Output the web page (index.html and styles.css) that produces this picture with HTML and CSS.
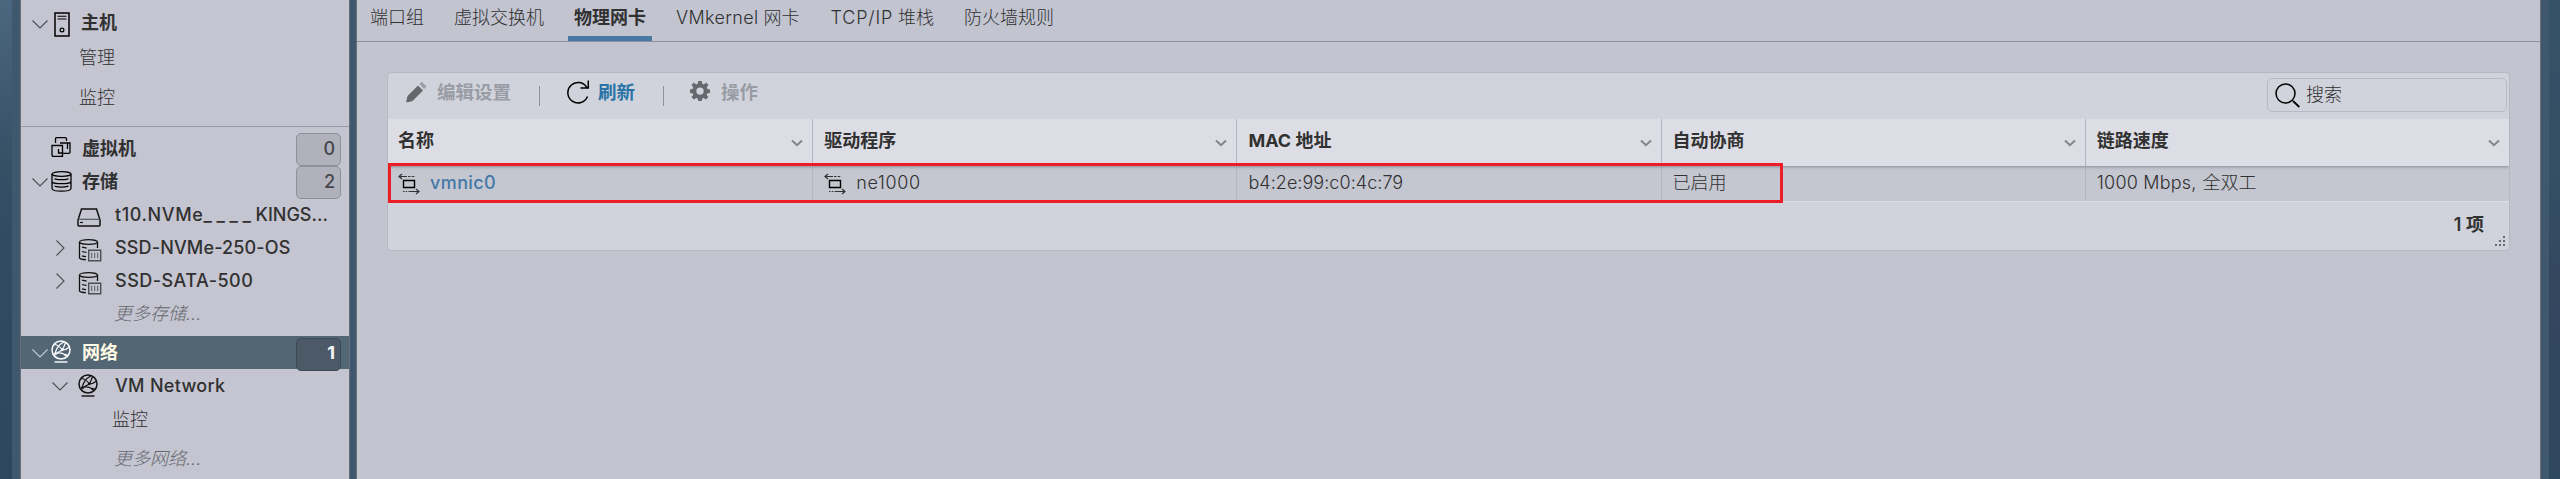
FILE: index.html
```html
<!DOCTYPE html>
<html lang="zh-CN">
<head>
<meta charset="utf-8">
<title>VMware ESXi</title>
<link rel="stylesheet" href="styles.css">
</head>
<body>
<svg class="defs" width="0" height="0">
  <symbol id="down" viewBox="0 0 16 9"><path d="M.5.5 8 8 15.5.5" fill="none" stroke="currentColor" stroke-width="1.1"/></symbol>
  <symbol id="right" viewBox="0 0 9 16"><path d="M.5.5 8 8 .5 15.5" fill="none" stroke="currentColor" stroke-width="1.1"/></symbol>
  <symbol id="caret" viewBox="0 0 12 8"><path d="M1 1.5 6 6.2 11 1.5" fill="none" stroke="currentColor" stroke-width="2"/></symbol>
  <symbol id="globe" viewBox="0 0 20 23"><g fill="none" stroke="currentColor" stroke-width="1.200"><circle cx="10" cy="10" r="9" stroke-width="1.500"/><path d="M3.500 4.500Q8 5 11.300 10Q15 10 18.500 7M11.300 10Q13.500 6 14.500 2.500M4 14Q5.500 6 13 1.800M4 14Q9 11.500 14.500 15L17 15M4 14 11.300 10"/></g><circle cx="11.300" cy="9.800" r="1.400" fill="currentColor"/><circle cx="4.500" cy="13.800" r="1.400" fill="currentColor"/><circle cx="14.500" cy="15" r="1.200" fill="currentColor"/><path d="M3.500 22h13" stroke="currentColor" stroke-width="2" opacity=".7"/></symbol>
  <symbol id="datastore" viewBox="0 0 24 23"><g fill="none" stroke="currentColor" stroke-width="1.300"><ellipse cx="10.500" cy="3" rx="9" ry="2.300"/><path d="M1.500 3v16Q2 20.500 8 20.700M19.500 3v6M4 8.200q2.500.8 4.500.8M4 12.500q2 .7 4.500.8M4 16.800q2 .7 4 .8"/></g><path d="M10.700 11.200h12v10.600h-12z" fill="#c4c5d0" stroke="#4c4e54" stroke-width="1.400"/><path d="M13.700 13.700v5.500M16.700 13.700v5.500M19.700 13.700v5.500" stroke="#55575e" stroke-width="1"/></symbol>
  <symbol id="nic" viewBox="0 0 22 22"><g fill="none" stroke="#333"><path d="M1 3.500h8M4 1 1 3.500 4 6" stroke-width="1.200"/><path d="M10 3.500h7.500" stroke-dasharray="2.500 1.200"/><path d="M12 18.500h9M18 16l3 2.500-3 2.500" stroke-width="1.200"/><path d="M5 18.500h7" stroke-dasharray="1.500 1.200"/></g><path d="M5.500 7.500h11v7h-11z" fill="none" stroke="#000" stroke-width="1.400"/></symbol>
</svg>
<div class="app">
  <div class="edge edge-left"></div>
  <nav class="sidebar">
    <div class="item host"><svg class="chev"><use href="#down"/></svg><svg class="icon-host" viewBox="0 0 16 25"><path d="M1 1h14v23H1z" fill="none" stroke="#000" stroke-width="1.500"/><path d="M3.500 4.300h9M3.500 7h9" stroke="#000" stroke-width="1.100"/><circle cx="8" cy="18" r="1.900" fill="none" stroke="#000" stroke-width="1.200"/></svg><b class="name">主机</b></div>
    <div class="sub">管理</div>
    <div class="sub">监控</div>
    <hr class="rule">
    <div class="item"><span class="chev"></span><svg class="icon" viewBox="0 0 20 20"><g fill="none" stroke="#000" stroke-width="1.300"><path d="M4.500 6V2q0-1.300 1.300-1.300h8.400q1.300 0 1.300 1.300v2M1 8.500h10.500v10.800H2.300Q1 19.300 1 18zM11.500 17v1q0 1.300-1.300 1.300M9 6h10v9.500q0 .8-1.200.8H12"/><path d="M16.500 6v6M7.500 12v4h4" /></g></svg><b class="name">虚拟机</b><span class="badge">0</span></div>
    <div class="item"><svg class="chev"><use href="#down"/></svg><svg class="icon-db" viewBox="0 0 21 21"><g fill="none" stroke="#000" stroke-width="1.300"><ellipse cx="10.500" cy="3" rx="9.500" ry="2.300"/><path d="M1 3v14.500q.5 2.700 9.500 2.700t9.500-2.700V3M3.500 7.800q7 1.800 14 0M1.500 11.200q1.500 1.500 9 1.500t9-1.500M3.500 15.200q7 1.800 14 0"/></g></svg><b class="name">存储</b><span class="badge">2</span></div>
    <div class="item child"><span class="chev"></span><svg class="icon-disk" viewBox="0 0 24 19"><path d="M4.500 1h15L23 12v5q0 1-1 1H2q-1 0-1-1v-5z" fill="none" stroke="#111" stroke-width="1.500"/><path d="M1.500 11.300h21" stroke="#55575e" stroke-width="1.200"/><path d="M3 14.500h3" stroke="#111" stroke-width="1.200"/></svg><span class="name"><span class="disk">t10.NVMe</span><span class="blank">____</span><span class="disk-end">KINGS...</span></span></div>
    <div class="item child"><svg class="chev-r"><use href="#right"/></svg><svg class="icon-ds"><use href="#datastore"/></svg><span class="name ds1">SSD-NVMe-250-OS</span></div>
    <div class="item child"><svg class="chev-r"><use href="#right"/></svg><svg class="icon-ds"><use href="#datastore"/></svg><span class="name ds2">SSD-SATA-500</span></div>
    <div class="more">更多存储...</div>
    <div class="item selected"><svg class="chev"><use href="#down"/></svg><svg class="icon-globe"><use href="#globe"/></svg><b class="name">网络</b><span class="badge">1</span></div>
    <div class="item child"><svg class="chev"><use href="#down"/></svg><svg class="icon-globe"><use href="#globe"/></svg><span class="name vmn">VM Network</span></div>
    <div class="sub deep">监控</div>
    <div class="more last">更多网络...</div>
  </nav>
  <div class="gutter"></div>
  <main class="main">
    <div class="tabs">
      <span class="tab">端口组</span><span class="tab">虚拟交换机</span><span class="tab active">物理网卡</span><span class="tab"><span class="t-kernel">VMkernel</span> 网卡</span><span class="tab"><span class="t-tcp">TCP/IP</span> 堆栈</span><span class="tab">防火墙规则</span>
    </div>
    <section class="card">
      <div class="toolbar">
        <span class="tool edit off"><svg class="i-pencil" viewBox="0 0 22 22"><path d="M1 21 2.500 15 13 4.500l5 5L7.500 20Q4 21.500 1 21z" fill="#66686e"/><path d="m14.500 3 2.300-2.300 4.700 4.700-2.400 2.500z" fill="#9a9da5"/></svg>编辑设置</span>
        <i class="sep"></i>
        <span class="tool refresh"><svg class="i-refresh" viewBox="0 0 24 24"><path d="M21.500 16.500A10.200 10.200 0 1 1 20.800 7.500M22.300.500V8H14.500" fill="none" stroke="#000" stroke-width="1.500"/></svg>刷新</span>
        <i class="sep"></i>
        <span class="tool off"><svg class="i-gear" viewBox="0 0 20 20"><path fill="#66686e" fill-rule="evenodd" d="M8.200 0h3.600l.5 2.800 1.500.6L16.100 1.600l2.400 2.500-1.700 2.200.6 1.600 2.600.5v3.500l-2.700.4-.6 1.600 1.700 2.200-2.400 2.500-2.300-1.700-1.500.6-.4 2.500H8.200l-.5-2.500-1.500-.6-2.300 1.700-2.400-2.500 1.700-2.200-.6-1.600L0 11.900V8.400l2.600-.5.6-1.600L1.500 4.100l2.400-2.500 2.300 1.800 1.500-.6zM10 6.400a3.700 3.700 0 1 0 0 7.400 3.700 3.700 0 0 0 0-7.400z"/></svg>操作</span>
        <div class="search"><svg class="i-search" viewBox="0 0 25 25"><circle cx="10.500" cy="10.500" r="9.500" fill="none" stroke="#000" stroke-width="1.500"/><path d="m18 18 6.300 6" stroke="#000" stroke-width="1.800"/></svg>搜索</div>
      </div>
      <div class="row head">
        <div class="cell">名称<svg class="caret"><use href="#caret"/></svg></div>
        <div class="cell">驱动程序<svg class="caret"><use href="#caret"/></svg></div>
        <div class="cell"><span class="t-mac">MAC</span>&nbsp;地址<svg class="caret"><use href="#caret"/></svg></div>
        <div class="cell">自动协商<svg class="caret"><use href="#caret"/></svg></div>
        <div class="cell">链路速度<svg class="caret"><use href="#caret"/></svg></div>
      </div>
      <div class="row data">
        <div class="cell"><svg class="i-nic"><use href="#nic"/></svg><a class="link">vmnic0</a></div>
        <div class="cell"><svg class="i-nic"><use href="#nic"/></svg><span class="t-ne">ne1000</span></div>
        <div class="cell"><span class="t-addr">b4:2e:99:c0:4c:79</span></div>
        <div class="cell">已启用</div>
        <div class="cell"><span class="t-speed">1000 Mbps,</span>全双工</div>
      </div>
      <div class="foot">1 项</div>
      <svg class="grip" viewBox="0 0 10 10"><path fill="#666870" d="M8 0h2v2H8zM4 4h2v2H4zM8 4h2v2H8zM0 8h2v2H0zM4 8h2v2H4zM8 8h2v2H8z"/></svg>
      <div class="highlight"></div>
    </section>
  </main>
  <div class="edge edge-right"></div>
</div>
</body>
</html>
```
FILE: styles.css
```css
* { box-sizing: border-box; }
body { margin: 0; overflow: hidden; font: 300 18px/26px Inter, "Noto Sans CJK SC", sans-serif; color: #313131; }
.defs { position: absolute; }
svg { display: block; flex: none; }
b { font-weight: 700; }

.app { display: flex; height: 479px; background: #3f586d; }
.edge { background: linear-gradient(#4b677f, #354f65 35%, #334a63 50%, #2f465f); }
.edge-left { width: 12px; margin-right: 8px; }
.edge-right { width: 11px; margin-left: 8px; background: linear-gradient(#365267, #354f65 35%, #33475f 60%, #2f465f); }
.gutter { width: 6px; }

.sidebar { width: 330px; padding-top: 9px; background: #c4c5d0; border: solid #6b6d78; border-width: 0 1px; }
.item { display: flex; align-items: center; height: 33px; padding: 0 8px 0 11px; color: #111; }
.item.host { height: 28px; }
.name { color: #313131; white-space: nowrap; }
b.name { flex: 1; }
.chev, .chev-r { flex: none; width: 16px; height: 9px; color: #4c4e54; }
.chev { margin-top: 2px; }
.chev-r { width: 9px; height: 16px; margin: 0 3px 0 4px; }
.icon-host { width: 16px; height: 25px; margin: 3px 11px 0 6px; }
.icon { width: 20px; height: 20px; margin: 0 11px 4px 3px; }
.icon-db { width: 21px; height: 21px; margin: 0 10px 0 3px; }
.icon-globe { width: 20px; height: 23px; margin: 0 11px 2px 3px; }
.child { padding-left: 31px; }
.child .name { font-weight: 500; }
.child .icon-globe { margin: 0 17px 0 10px; }
.icon-disk { width: 24px; height: 19px; margin: 6px 14px 0 9px; }
.icon-ds { width: 24px; height: 23px; margin: 5px 13px 0 10px; }
.disk { letter-spacing: .6px; }
.blank { letter-spacing: 4.7px; }
.disk-end { letter-spacing: 0; }
.ds1 { letter-spacing: .15px; }
.ds2 { letter-spacing: .5px; }
.vmn { letter-spacing: .3px; }
.badge { width: 45px; height: 33px; margin-top: 2px; padding: 1px 5px 0 0; border: 1px solid #8f8f99; border-radius: 5px; background: #b1b1bc; color: #45464c; font-weight: 500; line-height: 27px; text-align: right; }
.sub { height: 40px; padding-left: 58px; line-height: 42px; }
.deep { height: 35px; padding-left: 91px; line-height: 35px; }
.more { height: 33px; padding-left: 93px; line-height: 33px; font-style: italic; color: #65676e; }
.last { height: 42px; line-height: 43px; }
.rule { height: 1px; margin: 9px 0 5px; border: 0; background: #9698a2; }
.selected { margin-top: 6px; background: #536674; color: #fff; }
.selected .name { color: #fffbe6; }
.selected .chev { color: #c4c9d2; }
.selected .badge { margin-top: 3px; background: #4c5a67; border-color: #3d4a56; color: #f4f4f6; font-weight: 700; line-height: 26px; }

.main { flex: 1; min-width: 0; background: #c2c4d0; border: solid #6b6d78; border-width: 0 1px; }
.tabs { display: flex; gap: 18px; height: 42px; padding-left: 7px; border-bottom: 1px solid #8d8f9b; }
.tab { height: 41px; padding: 5px 6px 0; white-space: nowrap; }
.active { font-weight: 700; border-bottom: 5px solid #4779a4; }
.t-kernel { letter-spacing: .35px; }
.t-tcp { margin-left: 1px; letter-spacing: .8px; }

.card { position: relative; width: 2123px; height: 179px; margin: 30px 0 0 30px; background: #d0d3dc; border: 1px solid #b5b7c1; border-radius: 4px; }
.toolbar { display: flex; align-items: center; height: 46px; padding: 0 2px 8px 17px; font-size: 18.500px; font-weight: 700; }
.tool { display: flex; align-items: center; }
.off { color: #999ca4; }
.refresh { color: #2a73a6; }
.i-pencil { width: 22px; height: 22px; margin-right: 10px; }
.i-refresh { width: 24px; height: 24px; margin-right: 8px; }
.i-gear { width: 20px; height: 20px; margin: 0 11px 2px 0; }
.sep { width: 1px; height: 20px; margin: 7px 26px 0 28px; background: #8f929b; }
.search { display: flex; align-items: center; width: 240px; height: 34px; margin: 6px 0 0 auto; padding-left: 7px; border: 1px solid #b6b9c3; border-radius: 5px; font-size: 18px; font-weight: 300; }
.i-search { width: 25px; height: 25px; margin-right: 6px; }
.row { display: grid; grid-template-columns: repeat(5, 1fr); }
.cell { display: flex; align-items: center; padding-left: 11px; border-left: 1px solid #b4b6c0; white-space: nowrap; }
.cell:first-child { padding-left: 9px; border-color: transparent; }
.head { position: relative; height: 47px; background: #dddde5; font-weight: 700; box-shadow: 0 1px 3px #8b8d99; clip-path: inset(0 0 -5px); }
.head .cell { padding-bottom: 3px; }
.caret { width: 12px; height: 8px; margin: 4px 9px 0 auto; color: #83858d; }
.data { height: 36px; background: #c4c6d0; border-bottom: 1px solid #dadce4; }
.data .cell { padding-bottom: 1px; }
.i-nic { width: 22px; height: 22px; margin: 1px 10px 0 0; }
.link { color: #4478a6; font-weight: 500; letter-spacing: .4px; }
.t-ne { letter-spacing: .6px; }
.t-addr { letter-spacing: .05px; }
.foot { height: 48px; padding: 10px 25px 0; text-align: right; font-weight: 600; }
.grip { position: absolute; right: 4px; bottom: 4px; width: 10px; height: 10px; }
.highlight { position: absolute; left: 0; top: 90px; width: 1395px; height: 40px; border: 3px solid #ee1c24; }
.t-speed { margin-right: 6px; letter-spacing: .2px; }
```
